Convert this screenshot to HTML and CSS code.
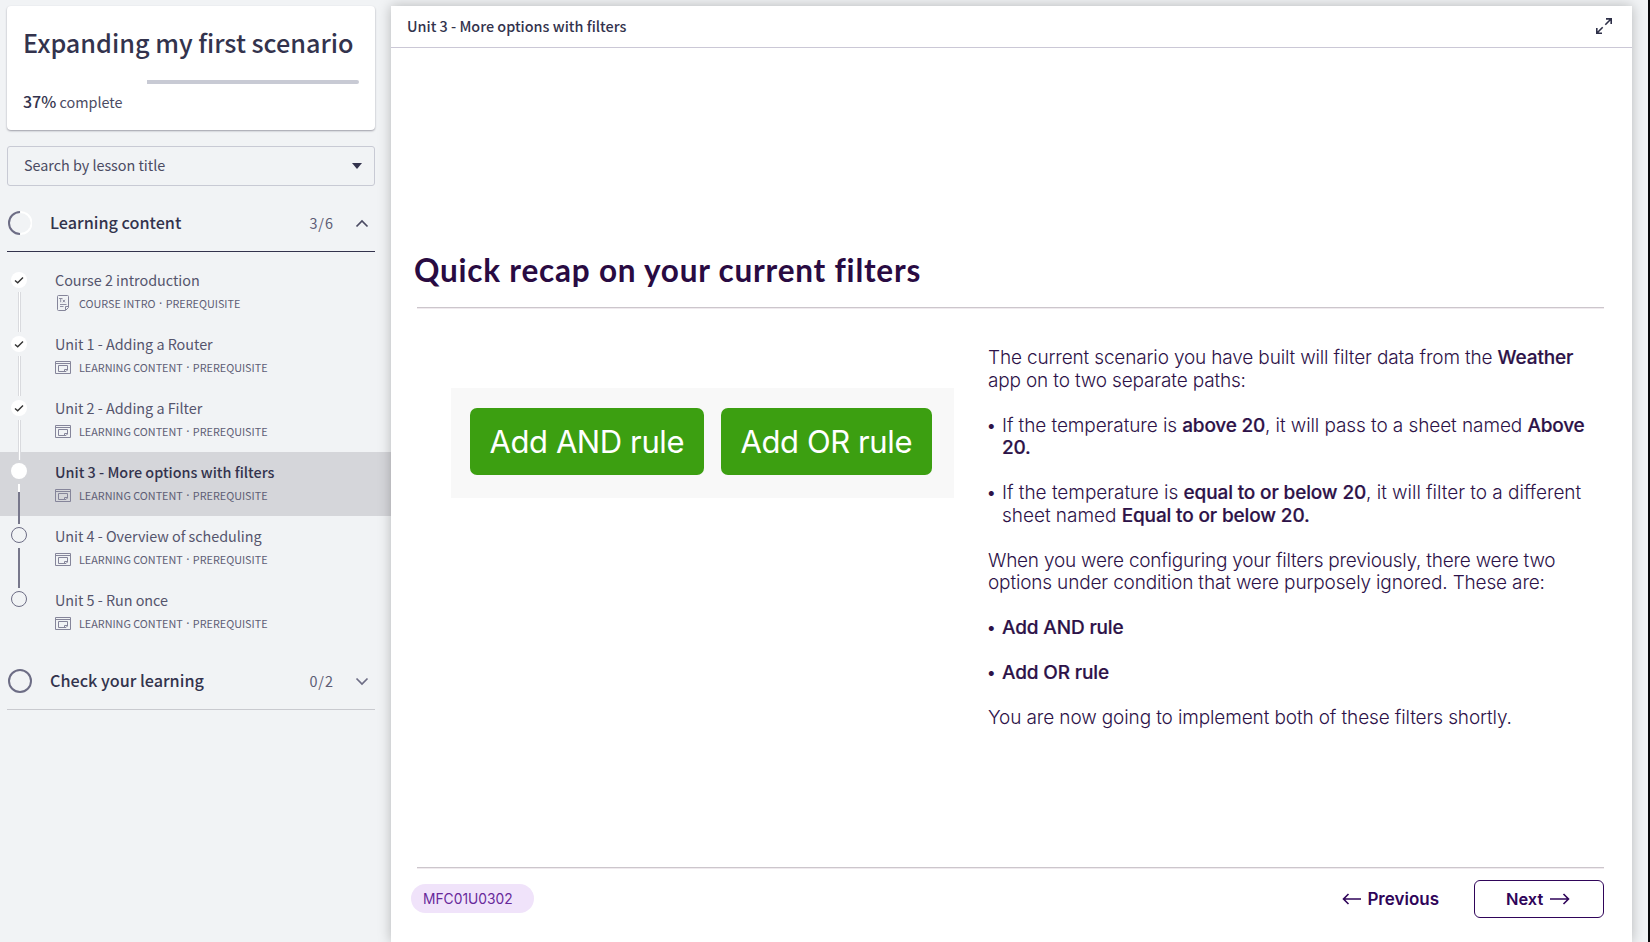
FILE: index.html
```html
<!DOCTYPE html>
<html lang="en">
<head>
<meta charset="utf-8">
<title>Expanding my first scenario</title>
<link rel="stylesheet" href="styles.css">
</head>
<body>
<svg width="0" height="0" class="defs">
  <symbol id="doc" viewBox="0 0 16 16"><g fill="none" stroke="currentColor"><path d="M10 15.500H3.500Q2.500 15.500 2.500 14.500V1.500Q2.500 .5 3.500 .5H12.500Q13.500 .5 13.500 1.500V12.500L10.500 15.500V11.500H13.500"/><path d="M4 3.500H7.500M5.700 3.500V7.300M7.800 4.800L10 7.300M10 4.800L7.800 7.300M5 9.500H11.500M5 11.500H8.500" stroke-width=".9"/></g></symbol>
  <symbol id="lesson" viewBox="0 0 16 13"><g fill="none" stroke="currentColor"><path d="M.5 .5H15.500V12.500H.5ZM.5 2.500H15.500"/><path d="M3.500 4.500H12.500V9L11 10.500H3.500ZM9.500 10V8.500H12.500"/></g></symbol>
  <symbol id="check" viewBox="0 0 16 16"><path d="M4 8.400L6.700 10.800L12 5.400" fill="none" stroke="#333" stroke-width="1.400"/></symbol>
</svg>
<aside class="sidebar">
  <section class="course">
    <h1>Expanding my first scenario</h1>
    <div class="bar"><i></i></div>
    <p class="done"><b>37%</b> complete</p>
  </section>
  <div class="search"><span>Search by lesson title</span><svg width="10" height="6" viewBox="0 0 10 6"><path d="M0 0H10L5 6Z" fill="#33334d"/></svg></div>
  <div class="section open">
    <svg class="ring" width="24" height="24" viewBox="0 0 24 24" fill="none" stroke-width="2"><path d="M12 1A11 11 0 0 0 12 23" stroke="#6d6d85"/><path d="M14 .8A11.400 11.400 0 0 1 14 23.200" stroke="#d8d8dd" stroke-width="1"/><path d="M12.500 1A11 11 0 0 1 12.500 23" stroke="#fff"/></svg>
    <h2>Learning content</h2><span class="count">3/6</span>
    <svg width="14" height="9" viewBox="0 0 14 9"><path d="M1.500 7.500L7 2L12.500 7.500" fill="none" stroke="#4b4b63" stroke-width="1.700"/></svg>
  </div>
  <ul class="lessons">
    <li class="passed"><div class="track"><span class="dot full"><svg width="16" height="16"><use href="#check"/></svg></span><i class="line white"></i></div><div><h3>Course 2 introduction</h3><p><svg width="16" height="16"><use href="#doc"/></svg><span>COURSE INTRO <i>·</i> PREREQUISITE</span></p></div></li>
    <li class="passed"><div class="track"><span class="dot full"><svg width="16" height="16"><use href="#check"/></svg></span><i class="line white"></i></div><div><h3>Unit 1 - Adding a Router</h3><p><svg width="16" height="13"><use href="#lesson"/></svg><span>LEARNING CONTENT <i>·</i> PREREQUISITE</span></p></div></li>
    <li class="passed"><div class="track"><span class="dot full"><svg width="16" height="16"><use href="#check"/></svg></span><i class="line white"></i></div><div><h3>Unit 2 - Adding a Filter</h3><p><svg width="16" height="13"><use href="#lesson"/></svg><span>LEARNING CONTENT <i>·</i> PREREQUISITE</span></p></div></li>
    <li class="current"><div class="track"><span class="dot full"></span><i class="line half"></i></div><div><h3>Unit 3 - More options with filters</h3><p><svg width="16" height="13"><use href="#lesson"/></svg><span>LEARNING CONTENT <i>·</i> PREREQUISITE</span></p></div></li>
    <li><div class="track"><span class="dot"></span><i class="line"></i></div><div><h3>Unit 4 - Overview of scheduling</h3><p><svg width="16" height="13"><use href="#lesson"/></svg><span>LEARNING CONTENT <i>·</i> PREREQUISITE</span></p></div></li>
    <li><div class="track"><span class="dot"></span></div><div><h3>Unit 5 - Run once</h3><p><svg width="16" height="13"><use href="#lesson"/></svg><span>LEARNING CONTENT <i>·</i> PREREQUISITE</span></p></div></li>
  </ul>
  <div class="section closed">
    <svg class="ring" width="24" height="24" viewBox="0 0 24 24" fill="none"><circle cx="12" cy="12" r="11" stroke="#6d6d85" stroke-width="2"/></svg>
    <h2>Check your learning</h2><span class="count">0/2</span>
    <svg width="14" height="9" viewBox="0 0 14 9"><path d="M1.500 1.500L7 7L12.500 1.500" fill="none" stroke="#6d6d85" stroke-width="1.700"/></svg>
  </div>
</aside>
<main class="panel">
  <header><span>Unit 3 - More options with filters</span>
    <svg width="16" height="16" viewBox="0 0 16 16" fill="none" stroke="#2e3048" stroke-width="1.600"><path d="M9.300 6.700L14.500 1.500M10 .9H15.200V6M6.700 9.300L1.500 14.500M.8 10V15.200H6"/></svg>
  </header>
  <article class="slide">
    <h2 class="heading">Quick recap on your current filters</h2>
    <div class="cols">
      <figure><span class="and">Add AND rule</span><span class="or">Add OR rule</span></figure>
      <div class="copy">
        <p class="tight">The current scenario you have built will filter data from the <b>Weather</b><br>app on to two separate paths:</p>
        <p class="bullet first">If the temperature is <b>above 20</b>, it will pass to a sheet named <b>Above<br>20.</b></p>
        <p class="bullet">If the temperature is <b>equal to or below 20</b>, it will filter to a different<br>sheet named <b>Equal to or below 20.</b></p>
        <p><span class="tighter">When you were configuring your filters previously, there were two</span><br><span class="tight">options under condition that were purposely ignored. These are:</span></p>
        <p class="bullet"><b>Add AND rule</b></p>
        <p class="bullet"><b>Add OR rule</b></p>
        <p class="snug">You are now going to implement both of these filters shortly.</p>
      </div>
    </div>
    <footer>
      <span class="pill">MFC01U0302</span>
      <a class="prev"><svg width="19" height="12" viewBox="0 0 19 12"><path d="M19 6H1.500M6.500 1L1.500 6L6.500 11" fill="none" stroke="#2f0459" stroke-width="1.600"/></svg>Previous</a>
      <a class="next">Next<svg width="20" height="12" viewBox="0 0 20 12"><path d="M0 6H18.500M13.500 1L18.500 6L13.500 11" fill="none" stroke="#2f0459" stroke-width="1.600"/></svg></a>
    </footer>
  </article>
</main>
</body>
</html>
```
FILE: styles.css
```css
* { box-sizing: border-box; margin: 0; padding: 0; }
body {
  display: flex; width: 1650px; height: 942px; overflow: hidden;
  background: #f1f3f5; color: #33334d; border-right: 2px solid #08080a;
  font-family: "Noto Sans CJK SC", "Noto Sans", sans-serif; font-size: 14.4px; line-height: 20px;
  white-space: nowrap;
}
svg { display: block; flex: none; }
.defs { position: absolute; }
.sidebar { width: 391px; flex: none; padding-top: 6px; }
.course {
  width: 368px; height: 124px; margin-left: 7px; padding: 18px 16px 0; background: #fff;
  border-radius: 4px; box-shadow: 0 1px 2px rgba(30, 30, 50, .4);
}
.course h1 { font-size: 25.2px; font-weight: 500; line-height: 36px; }
.bar { height: 4px; margin-top: 20px; padding-left: 124px; }
.bar i { display: block; height: 4px; background: #c8cad4; border-radius: 0 2px 2px 0; }
.done { margin-top: 7px; color: #4b4b63; }
.done b { font-weight: 500; font-size: 16px; color: #33334d; }
.search {
  display: flex; align-items: center; justify-content: space-between;
  width: 368px; height: 40px; margin: 16px 0 0 7px; padding: 0 12px 0 16px;
  border: 1px solid #c8cad4; border-radius: 3px; color: #4b4b63;
}
.search span { padding-bottom: 2px; letter-spacing: -.03px; }
.section {
  display: flex; align-items: center; width: 368px; height: 57px; margin-left: 7px; padding-right: 6px;
  border-bottom: 1px solid #33334d;
}
.section.open { margin-top: 9px; }
.section.closed { margin-top: 9px; border-color: #c9cacf; }
.ring { margin-left: 1px; }
.section h2 { flex: 1; margin-left: 18px; padding-bottom: 2px; font-size: 16.2px; font-weight: 500; }
.count { margin-right: 21px; letter-spacing: 1px; color: #5c5c74; }
.lessons { list-style: none; padding-top: 8px; }
.lessons li { display: flex; height: 64px; padding: 10px 0 0 11px; }
.current { background: #d5d6da; }
.track { width: 44px; height: 53px; display: flex; flex-direction: column; }
.dot { width: 16px; height: 16px; margin-top: 1px; border: 1px solid #6d6d85; border-radius: 50%; flex: none; }
.dot.full { background: #fff; border: 0; }
.passed .dot { margin-top: 2px; }
.line { width: 2px; height: 40px; margin: 5px 0 0 7px; background: #77778b; flex: none; }
.line.white { width: 3px; margin-top: 4px; background: #fff; border: solid #d9dade; border-width: 0 1px; }
.line.half { background: linear-gradient(#fff 8px, #77778b 8px); }
.lessons h3 { font-size: 14.4px; font-weight: 400; line-height: 20px; color: #55556d; letter-spacing: -.03px; }
.lessons .current h3 { font-weight: 500; color: #33334d; letter-spacing: 0; }
.lessons p { display: flex; align-items: center; gap: 8px; height: 16px; margin-top: 5px; font-size: 10.8px; color: #5e5e75; }
.lessons p svg { color: #85859a; }
.lessons p i { display: inline-block; width: 5.3px; font: 12px/12px "Noto Sans", sans-serif; text-align: center; }

.panel {
  width: 1241px; height: 936px; margin-top: 6px; background: #fff; flex: none;
  box-shadow: 0 0 12px rgba(0, 0, 0, .25);
}
.panel header {
  display: flex; align-items: center; justify-content: space-between; height: 42px;
  padding: 0 20px 2px 16px; border-bottom: 1px solid #cbc8d6; font-weight: 500;
}
.slide { padding: 0 28px 0 26px; font-family: Inter, sans-serif; color: #2d1248; }
.heading {
  height: 259px; padding-top: 202px; margin-left: -3px; font: 700 31.5px/40px Lato, sans-serif;
  letter-spacing: .78px; color: #290b42;
}
.cols {
  display: flex; height: 561px; border-top: 1px solid #ccc6cc; border-bottom: 1px solid #ccc6cc;
  box-shadow: 0 1px #f0eaee, inset 0 1px #f0eaee;
}
figure {
  display: flex; gap: 17px; width: 503px; height: 110px; margin: 80px 0 0 34px; padding: 20px 0 0 19px;
  background: #f8f8f8; flex: none;
}
figure span {
  flex: none; height: 67px; line-height: 67px; text-align: center; border-radius: 7px; background: #3c9f11;
  color: #fff; font-size: 31px; letter-spacing: -.4px;
}
.and { width: 233.5px; }
.or { width: 211.5px; }
.copy { margin: 39px 0 0 34px; font-size: 19px; line-height: 22.5px; font-weight: 300; }
.copy p { margin-bottom: 22.5px; }
.copy b { font-weight: 500; -webkit-text-stroke: .2px #2d1248; letter-spacing: -.14px; }
.tight { letter-spacing: -.16px; }
.tighter { letter-spacing: -.23px; }
.snug { letter-spacing: -.12px; }
.bullet { padding-left: 14px; position: relative; letter-spacing: -.03px; }
.bullet.first { letter-spacing: -.09px; }
.bullet.first b { letter-spacing: -.2px; }
.bullet::before { content: "•"; position: absolute; left: -1px; top: -1px; font-size: 16px; font-weight: 500; }
footer { display: flex; align-items: center; height: 64px; padding-bottom: 2px; }
.pill {
  width: 123px; height: 29px; margin: -1px 0 0 -6px; padding-left: 12px; line-height: 30px; border-radius: 15px;
  background: #f0e3fa; color: #68299a; font-size: 13.8px;
}
.prev, .next { display: flex; align-items: center; color: #2f0459; font-weight: 600; font-size: 17px; }
.prev { gap: 6px; margin: -1px 35px 0 auto; }
.next { gap: 7px; width: 130px; height: 38px; padding: 0 0 1px 31px; border: 1px solid #2f0459; border-radius: 6px; font-size: 16.4px; }
```
